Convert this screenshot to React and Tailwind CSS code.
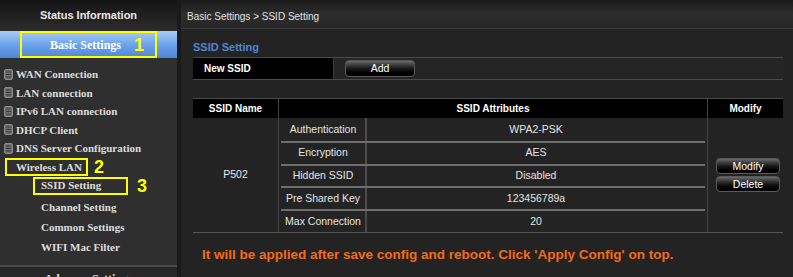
import React from 'react';

const serif = { fontFamily: '"Liberation Serif", "Times New Roman", serif' };
const sans = { fontFamily: '"Liberation Sans", Arial, sans-serif' };

const ListIcon = () => (
  <svg width="9" height="11" viewBox="0 0 9 11" className="shrink-0">
    <rect x="0.5" y="0.5" width="8" height="10" rx="1.5" fill="#6f6f6f" stroke="#8a8a8a" />
    <line x1="2" y1="3" x2="7" y2="3" stroke="#3a3a3a" />
    <line x1="2" y1="5.5" x2="7" y2="5.5" stroke="#3a3a3a" />
    <line x1="2" y1="8" x2="7" y2="8" stroke="#3a3a3a" />
  </svg>
);

const menu = ['WAN Connection', 'LAN connection', 'IPv6 LAN connection', 'DHCP Client', 'DNS Server Configuration'];
const wireless = ['Channel Setting', 'Common Settings', 'WIFI Mac Filter'];

const attrs = [
  ['Authentication', 'WPA2-PSK'],
  ['Encryption', 'AES'],
  ['Hidden SSID', 'Disabled'],
  ['Pre Shared Key', '123456789a'],
  ['Max Connection', '20'],
];

const DarkButton = ({ children, className }) => (
  <button
    type="button"
    className={`rounded-[4px] border border-[#5a5a5a] bg-gradient-to-b from-[#6a6a6a] via-[#1a1a1a] to-[#000] text-[10.5px] text-white leading-none ${className}`}
  >
    {children}
  </button>
);

const Sidebar = () => (
  <div className="w-[177px] shrink-0 flex flex-col bg-[#2f2f2f]">
    <div className="h-[31px] shrink-0 flex items-center justify-center bg-gradient-to-b from-[#151515] to-[#2c2c2c] text-[11px] font-bold text-[#e8e8e8]" style={sans}>
      Status Information
    </div>
    <div className="h-[27px] shrink-0 flex items-stretch bg-gradient-to-b from-[#a8cdf7] via-[#6ea4ea] to-[#4c86d8]">
      <div className="ml-[20px] w-[137px] border-2 border-[#ffff00] flex items-center">
        <span className="ml-[28px] text-[12px] font-bold text-white" style={serif}>Basic Settings</span>
        <span className="ml-[13px] text-[18px] font-bold text-[#ffff00] leading-none" style={sans}>1</span>
      </div>
    </div>
    <div className="shrink-0 flex flex-col pt-[7px]" style={serif}>
      {menu.map((m) => (
        <div key={m} className="h-[18.5px] shrink-0 flex items-center gap-[3px] pl-[4px] text-[11px] font-bold text-[#dcdcdc]">
          <ListIcon />
          <span>{m}</span>
        </div>
      ))}
      <div className="h-[18.5px] shrink-0 flex items-center pl-[5px]">
        <div className="h-[18px] w-[83px] border-2 border-[#ffff00] flex items-center pl-[9px] text-[11px] font-bold text-[#dcdcdc]">
          Wireless LAN
        </div>
        <span className="ml-[6px] text-[18px] font-bold text-[#ffff00] leading-none" style={sans}>2</span>
      </div>
      <div className="h-[19px] shrink-0 flex items-center pl-[33px]">
        <div className="h-[18px] w-[95px] border-2 border-[#ffff00] flex items-center pl-[6px] text-[11px] font-bold text-[#dcdcdc]">
          SSID Setting
        </div>
        <span className="ml-[9px] text-[18px] font-bold text-[#ffff00] leading-none" style={sans}>3</span>
      </div>
      <div className="h-[2px] shrink-0" />
      {wireless.map((m) => (
        <div key={m} className="h-[20px] shrink-0 flex items-center pl-[41px] text-[11px] font-bold text-[#dcdcdc]">
          {m}
        </div>
      ))}
    </div>
    <div className="mt-[8px] shrink-0 border-t-2 border-[#4a4a4a] bg-[#272727] h-[24px] flex items-start justify-center pt-[5px] text-[12px] leading-[14px] font-bold text-[#e0e0e0]" style={serif}>
      Advance Settings
    </div>
  </div>
);

const Main = () => (
  <div className="flex-1 ml-[4px] flex flex-col bg-[#232323] text-[#e6e6e6]" style={sans}>
    <div className="h-[29px] shrink-0 flex items-center pl-[6px] pt-[4px] border-b border-[#3a3a3a] bg-gradient-to-b from-[#1a1a1a] via-[#2e2e2e] to-[#262626] text-[10px] text-[#e0e0e0]">
      Basic Settings &gt; SSID Setting
    </div>
    <div className="pl-[12px] pr-[10px]">
      <div className="mt-[11px] text-[11px] leading-[14px] font-bold text-[#4f86d2]">SSID Setting</div>
      <div className="mt-[3px] h-[23px] flex border-y border-[#4a4a4a] bg-[#242424]">
        <div className="w-[140px] bg-black flex items-center pl-[11px] text-[10px] font-bold text-white">New SSID</div>
        <div className="flex items-center pl-[11px] border-l border-[#3a3a3a]">
          <DarkButton className="w-[70px] h-[17px]">Add</DarkButton>
        </div>
      </div>

      <div className="mt-[18px] border-b border-[#555]">
        <div className="h-[20px] flex bg-black text-[10px] font-bold text-white border-t border-[#4a4a4a]">
          <div className="w-[85px] flex items-center justify-center">SSID Name</div>
          <div className="flex-1 flex items-center justify-center border-l border-[#444]">SSID Attributes</div>
          <div className="w-[76px] flex items-center justify-center border-l border-[#444]">Modify</div>
        </div>
        <div className="flex bg-[#232323]">
          <div className="w-[85px] flex items-center justify-center text-[10.5px] text-[#e8e8e8]">P502</div>
          <div className="flex-1 flex flex-col border-l border-[#444] pl-[2px] pr-[2px]">
            {attrs.map(([k, v], i) => (
              <div key={k} className={`h-[22.75px] flex ${i > 0 ? 'border-t-2 border-[#6e6e6e]' : ''}`}>
                <div className="w-[86px] flex items-center justify-center text-[10.5px] text-[#e4e4e4] border-r-2 border-[#4a4a4a]">{k}</div>
                <div className="flex-1 flex items-center justify-center text-[10.5px] text-[#e4e4e4]">{v}</div>
              </div>
            ))}
          </div>
          <div className="w-[76px] flex flex-col items-center justify-center gap-[2px] border-l border-[#444] pl-[5px]">
            <DarkButton className="w-[64px] h-[16px]">Modify</DarkButton>
            <DarkButton className="w-[64px] h-[16px]">Delete</DarkButton>
          </div>
        </div>
      </div>

      <div className="mt-[13px] pl-[9px] text-[13.5px] leading-[18px] font-bold text-[#f26a1b]">
        It will be applied after save config and reboot. Click 'Apply Config' on top.
      </div>
    </div>
  </div>
);

export default function App() {
  return (
    <div className="w-[793px] h-[277px] overflow-hidden flex bg-[#1a1a1a]">
      <Sidebar />
      <Main />
    </div>
  );
}
